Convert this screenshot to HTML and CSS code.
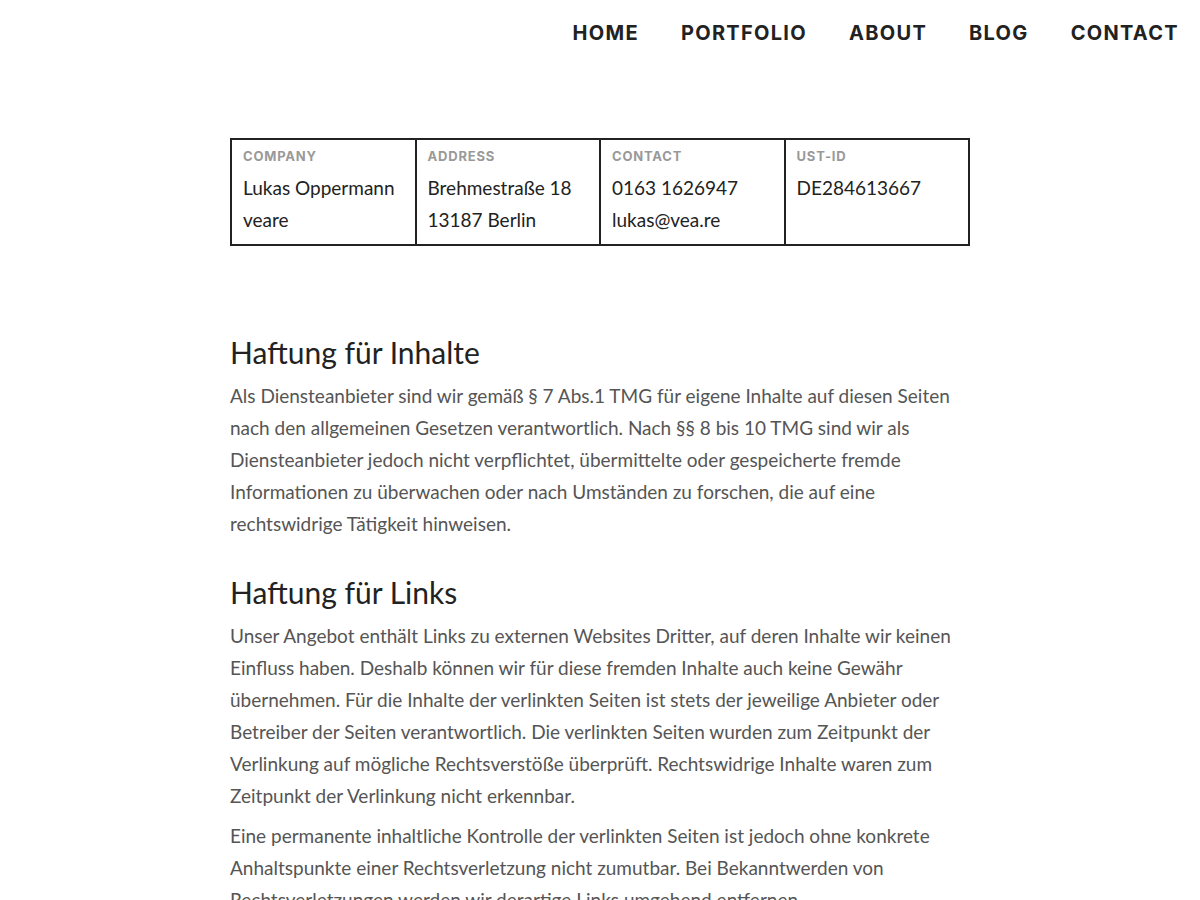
FILE: index.html
```html
<!DOCTYPE html>
<html lang="de">
<head>
<meta charset="utf-8">
<title>Impressum</title>
<link rel="stylesheet" href="styles.css">
</head>
<body>
<header class="site-header">
  <nav class="main-nav">
    <a href="#">HOME</a>
    <a href="#">PORTFOLIO</a>
    <a href="#">ABOUT</a>
    <a href="#">BLOG</a>
    <a href="#">CONTACT</a>
  </nav>
</header>
<main class="content">
  <div class="info-table">
    <div class="cell">
      <div class="label">COMPANY</div>
      <div class="value">Lukas Oppermann<br>veare</div>
    </div>
    <div class="cell">
      <div class="label">ADDRESS</div>
      <div class="value">Brehmestraße 18<br>13187 Berlin</div>
    </div>
    <div class="cell">
      <div class="label">CONTACT</div>
      <div class="value">0163 1626947<br>lukas@vea.re</div>
    </div>
    <div class="cell">
      <div class="label">UST-ID</div>
      <div class="value">DE284613667</div>
    </div>
  </div>

  <section class="legal">
    <h2>Haftung für Inhalte</h2>
    <p>Als Diensteanbieter sind wir gemäß § 7 Abs.1 TMG für eigene Inhalte auf diesen Seiten nach den allgemeinen Gesetzen verantwortlich. Nach §§ 8 bis 10 TMG sind wir als Diensteanbieter jedoch nicht verpflichtet, übermittelte oder gespeicherte fremde Informationen zu überwachen oder nach Umständen zu forschen, die auf eine rechtswidrige Tätigkeit hinweisen.</p>
    <h2>Haftung für Links</h2>
    <p>Unser Angebot enthält Links zu externen Websites Dritter, auf deren Inhalte wir keinen Einfluss haben. Deshalb können wir für diese fremden Inhalte auch keine Gewähr übernehmen. Für die Inhalte der verlinkten Seiten ist stets der jeweilige Anbieter oder Betreiber der Seiten verantwortlich. Die verlinkten Seiten wurden zum Zeitpunkt der Verlinkung auf mögliche Rechtsverstöße überprüft. Rechtswidrige Inhalte waren zum Zeitpunkt der Verlinkung nicht erkennbar.</p>
    <p>Eine permanente inhaltliche Kontrolle der verlinkten Seiten ist jedoch ohne konkrete Anhaltspunkte einer Rechtsverletzung nicht zumutbar. Bei Bekanntwerden von Rechtsverletzungen werden wir derartige Links umgehend entfernen.</p>
  </section>
</main>
</body>
</html>
```
FILE: styles.css
```css
* { box-sizing: border-box; }
html, body { margin: 0; padding: 0; background: #fff; }
body {
  font-family: Lato, "Open Sans", sans-serif;
  color: #555;
}
.site-header {
  display: flex;
  justify-content: flex-end;
  height: 66px;
  padding-right: 21px;
}
.main-nav {
  display: flex;
  align-items: center;
  gap: 42px;
}
.main-nav a {
  font-family: Inter, "Open Sans", sans-serif;
  font-weight: 700;
  font-size: 20px;
  letter-spacing: 1.3px;
  color: #222;
  text-decoration: none;
}
.content {
  width: 740px;
  margin: 72px auto 0;
}
.info-table {
  display: grid;
  grid-template-columns: repeat(4, 1fr);
  border: 2px solid #222;
  border-right: 0;
}
.cell {
  border-right: 2px solid #222;
  padding: 8px 12px 8px 11px;
}
.label {
  font-family: Inter, "Open Sans", sans-serif;
  font-weight: 700;
  font-size: 13px;
  line-height: 16px;
  letter-spacing: 0.8px;
  color: #999;
  margin-bottom: 8px;
}
.value {
  font-size: 19px;
  line-height: 32px;
  color: #222;
}
.legal { margin-top: 86px; }
.legal h2 {
  font-weight: 400;
  font-size: 30px;
  line-height: 40px;
  color: #222;
  margin: 0 0 8px;
}
.legal p {
  font-size: 19px;
  line-height: 32px;
  margin: 0 0 8px;
}
.legal p + h2 { margin-top: 32px; }
```
